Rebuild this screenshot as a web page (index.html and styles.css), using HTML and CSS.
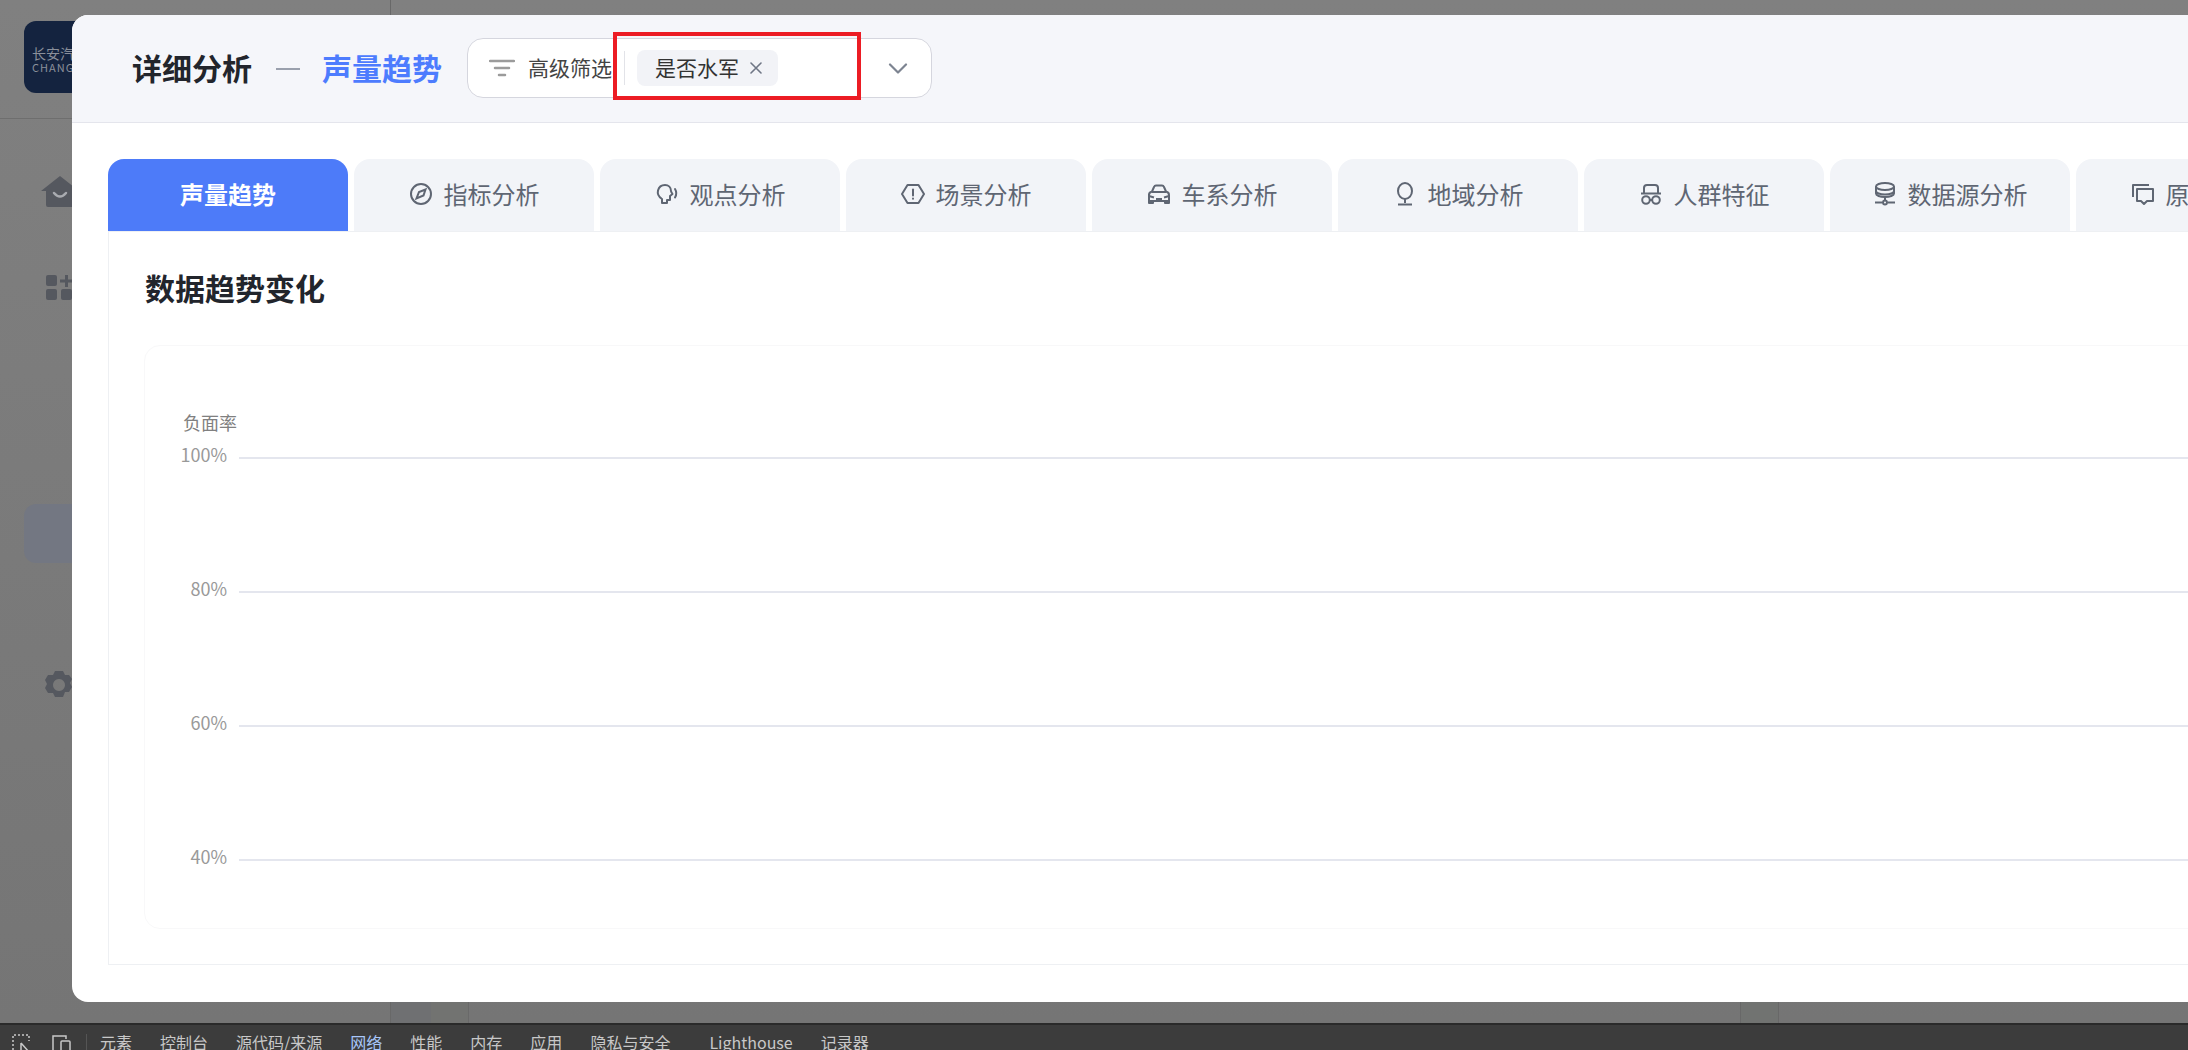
FILE: index.html
```html
<!DOCTYPE html>
<html lang="zh-CN">
<head>
    <meta charset="UTF-8">
    <meta name="viewport" content="width=device-width, initial-scale=1.0">
    <title>详细分析 - 声量趋势</title>
    <link rel="stylesheet" href="styles.css">
</head>
<body>
    <div class="page">
        <div class="page-main">
            <div class="sidebar">
                <div class="logo-row">
                    <div class="logo">
                        <span class="logo-cn">长安汽车</span>
                        <span class="logo-en">CHANGAN</span>
                    </div>
                </div>
                <div class="side-item side-home">
                    <svg width="40" height="32" viewBox="0 0 40 32"><path fill="#55585f" d="M20 0 L39 15 H34 V29 Q34 31 32 31 H8 Q6 31 6 29 V15 H1 Z"/><path fill="none" stroke="#a9abb0" stroke-width="2.5" stroke-linecap="round" d="M14 17 Q20 24 26 17"/></svg>
                </div>
                <div class="side-item side-grid">
                    <svg width="40" height="28" viewBox="0 0 40 28" fill="#55585f"><rect x="1" y="1" width="11" height="11" rx="2"/><rect x="1" y="15" width="11" height="11" rx="2"/><rect x="16" y="15" width="11" height="11" rx="2"/><path d="M20 1h3v4.500h5v3h-5V13h-3V8.500h-5v-3h5z"/></svg>
                </div>
                <div class="side-active"></div>
                <div class="side-item side-gear">
                    <svg width="40" height="30" viewBox="0 0 40 30"><path fill="#55585f" fill-rule="evenodd" d="M14 1h8l2 4 4 0 3 4-2 4 2 4-3 5-4 0-2 5h-8l-2-4-5 0-3-5 2-4-2-4 3-5 5 0zM18 9a6 6 0 1 0 0.010 0z"/></svg>
                </div>
            </div>
            <div class="page-split"></div>
            <div class="page-split-right"></div>
            <div class="page-rest"></div>
            <div class="page-block"></div>
        </div>

        <div class="devtools">
            <svg class="dev-icon" width="20" height="20" viewBox="0 0 20 20" fill="none" stroke="#c8c8c8" stroke-width="1.500"><path stroke-dasharray="2 2" d="M1 16V1h16v6"/><path d="M9 9v9M9 9l8 9"/></svg>
            <svg class="dev-icon" width="22" height="20" viewBox="0 0 22 20" fill="none" stroke="#c8c8c8" stroke-width="1.500"><path d="M3 18V2h13v3"/><rect x="11" y="7" width="9" height="12" rx="1"/><path d="M1 18h9"/></svg>
            <div class="dev-divider"></div>
            <div class="dev-tabs">
                <span>元素</span>
                <span>控制台</span>
                <span>源代码/来源</span>
                <span class="dev-on">网络</span>
                <span>性能</span>
                <span>内存</span>
                <span>应用</span>
                <span>隐私与安全</span>
                <span class="dev-wide">Lighthouse</span>
                <span>记录器</span>
            </div>
        </div>
    </div>

    <div class="modal">
        <div class="modal-header">
            <span class="title">详细分析</span>
            <span class="title-dash"></span>
            <span class="title title-active">声量趋势</span>
            <div class="filter">
                <svg class="filter-icon" width="26" height="18" viewBox="0 0 26 18" fill="none" stroke="#9b9b9b" stroke-width="2.500" stroke-linecap="round"><path d="M1 2h24M6 9h14M10 16h6"/></svg>
                <span class="filter-label">高级筛选</span>
                <span class="filter-line"></span>
                <div class="tag">
                    <span class="tag-text">是否水军</span>
                    <svg width="12" height="12" viewBox="0 0 12 12" stroke="#6f7685" stroke-width="1.600" stroke-linecap="round"><path d="M1 1l10 10M11 1L1 11"/></svg>
                </div>
                <svg class="filter-arrow" width="20" height="11" viewBox="0 0 20 11" fill="none" stroke="#7d8491" stroke-width="2.200" stroke-linecap="round" stroke-linejoin="round"><path d="M2 1.500l8 8 8-8"/></svg>
            </div>
            <div class="red-mark"></div>
        </div>

        <div class="modal-body">
            <div class="tabs">
                <div class="tab tab-active">声量趋势</div>
                <div class="tab">
                    <svg width="24" height="24" viewBox="0 0 24 24" fill="none" stroke="#5f6673" stroke-width="2"><circle cx="12" cy="12" r="10"/><path d="M16.500 7.500l-2 6-7 3 2.500-6.500z"/></svg>
                    指标分析
                </div>
                <div class="tab">
                    <svg width="24" height="24" viewBox="0 0 24 24" fill="none" stroke="#5f6673" stroke-width="2" stroke-linecap="round" stroke-linejoin="round"><path d="M7 21v-4C4 15 2 12.500 3 8.500 4 4.500 7 3 10 3c3.500 0 6 2.500 6 6 0 1 1 2 1.500 3L15 14v4l-3 0v3z"/><path d="M20 7c1.500 2.500 1.500 6 0 8.500"/></svg>
                    观点分析
                </div>
                <div class="tab">
                    <svg width="24" height="24" viewBox="0 0 24 24" fill="none" stroke="#5f6673" stroke-width="2" stroke-linejoin="round"><path d="M6.500 3h11L23 12l-5.500 9h-11L1 12z"/><path stroke-linecap="round" d="M12 7.500v6"/><path stroke-linecap="round" d="M12 16.500v.3"/></svg>
                    场景分析
                </div>
                <div class="tab">
                    <svg width="24" height="24" viewBox="0 0 24 24" fill="none" stroke="#5f6673" stroke-width="2" stroke-linejoin="round"><path d="M2 19v-6c0-2 1-3 3-3.500L7 5c.4-1 1-1.500 2-1.500h6c1 0 1.600.5 2 1.500l2 4.500c2 .5 3 1.500 3 3.500v6z"/><path d="M2 19v2h4v-2M18 19v2h4v-2M5 10h14M2 14l5 1.500M22 14l-5 1.500M9 17h6"/></svg>
                    车系分析
                </div>
                <div class="tab">
                    <svg width="24" height="24" viewBox="0 0 24 24" fill="none" stroke="#5f6673" stroke-width="2"><ellipse cx="12" cy="9" rx="7" ry="8"/><path d="M12 17v4M5 22.500h14"/></svg>
                    地域分析
                </div>
                <div class="tab">
                    <svg width="24" height="24" viewBox="0 0 24 24" fill="none" stroke="#5f6673" stroke-width="2" stroke-linejoin="round"><path d="M5 11V6c0-2 1-3 3-3h8c2 0 3 1 3 3v5"/><path d="M2 11.500h20"/><circle cx="7" cy="18" r="3.800"/><circle cx="17" cy="18" r="3.800"/><path d="M10.800 18h2.400"/></svg>
                    人群特征
                </div>
                <div class="tab">
                    <svg width="24" height="24" viewBox="0 0 24 24" fill="none" stroke="#5f6673" stroke-width="2" stroke-linejoin="round"><ellipse cx="12" cy="4.500" rx="9" ry="3.500"/><path d="M3 4.500v7c0 2 4 3.500 9 3.500s9-1.500 9-3.500v-7M3 9c0 2 4 3.500 9 3.500s9-1.500 9-3.500M12 15v4M2 20.500h7M15 20.500h7"/><circle cx="12" cy="20.500" r="2"/></svg>
                    数据源分析
                </div>
                <div class="tab">
                    <svg width="24" height="24" viewBox="0 0 24 24" fill="none" stroke="#5f6673" stroke-width="2" stroke-linejoin="round"><path d="M2 15V3h16"/><path d="M6 7h16v12h-6l-3 3-3-3H6z"/></svg>
                    原文分析
                </div>
            </div>

            <div class="panel">
                <h2 class="panel-title">数据趋势变化</h2>
                <div class="chart-card">
                    <div class="axis-name">负面率</div>
                    <div class="chart-row"><span class="axis-label">100%</span><span class="grid-line"></span></div>
                    <div class="chart-row"><span class="axis-label">80%</span><span class="grid-line"></span></div>
                    <div class="chart-row"><span class="axis-label">60%</span><span class="grid-line"></span></div>
                    <div class="chart-row"><span class="axis-label">40%</span><span class="grid-line"></span></div>
                </div>
            </div>
        </div>
    </div>
</body>
</html>
```

FILE: styles.css
```css
html, body {
    margin: 0;
    height: 100%;
    overflow: hidden;
}

body {
    position: relative;
    width: 2188px;
    height: 1050px;
    font-family: "Noto Sans CJK SC", "Noto Sans", sans-serif;
    background-color: #7b7b7b;
}

.page {
    display: flex;
    flex-direction: column;
    height: 1050px;
}

.page-main {
    flex: 1;
    display: flex;
    background: linear-gradient(#808080, #757575);
}

.sidebar {
    width: 390px;
    flex-shrink: 0;
    display: flex;
    flex-direction: column;
    align-items: flex-start;
}

.logo-row {
    width: 100%;
    height: 119px;
    box-sizing: border-box;
    padding: 21px 0 0 24px;
    border-bottom: 1px solid #6e6e6e;
}

.logo {
    width: 110px;
    height: 72px;
    border-radius: 12px;
    background-color: #14233f;
    display: flex;
    flex-direction: column;
    justify-content: center;
    padding: 4px 0 0 8px;
    box-sizing: border-box;
    color: #8a8f9a;
}

.logo-cn {
    font-size: 14px;
    line-height: 15px;
}

.logo-en {
    font-size: 11px;
    line-height: 12px;
    letter-spacing: 1px;
}

.side-item {
    line-height: 0;
}

.side-home {
    margin-top: 57px;
    padding-left: 40px;
}

.side-grid {
    margin-top: 66px;
    padding-left: 45px;
}

.side-active {
    width: 100px;
    height: 59px;
    margin: 202px 0 0 24px;
    border-radius: 12px;
    background-color: #737782;
}

.side-gear {
    margin-top: 107px;
    padding-left: 41px;
}

/* the darker bits of the page only show in the strip under the dialog */
.page-split {
    width: 41px;
    box-sizing: border-box;
    border-left: 1px solid #686868;
    background: linear-gradient(#6f7072, #6f7072) no-repeat bottom / 100% 21px;
}

.page-split-right {
    width: 37px;
    height: 21px;
    align-self: flex-end;
    background-color: #727371;
    border-right: 1px solid #696969;
}

.page-rest {
    width: 1271px;
}

.page-block {
    width: 37px;
    height: 21px;
    align-self: flex-end;
    background-color: #717371;
    border: 1px solid #686868;
    border-width: 0 1px;
}

.devtools {
    height: 25px;
    flex-shrink: 0;
    display: flex;
    align-items: flex-start;
    padding-left: 12px;
    background-color: #3c3c3c;
    border-top: 2px solid #2a2a2a;
    overflow: hidden;
    color: #c8c8c8;
    font-size: 16px;
}

.dev-icon {
    margin-top: 9px;
    margin-right: 18px;
    flex-shrink: 0;
}

.dev-divider {
    width: 1px;
    height: 22px;
    margin: 9px 13px 0 -4px;
    background-color: #555;
}

.dev-tabs {
    display: flex;
    gap: 28px;
    line-height: 16px;
    padding-top: 9px;
    white-space: nowrap;
}

.dev-on {
    color: #a8c7fa;
}

.dev-wide {
    margin-left: 11px;
}

/* the dialog runs past the right edge of the window */
.modal {
    position: absolute;
    left: 72px;
    top: 15px;
    width: 2400px;
    height: 987px;
    background-color: #fff;
    border-radius: 16px;
    overflow: hidden;
}

.modal-header {
    position: relative;
    height: 108px;
    box-sizing: border-box;
    display: flex;
    align-items: center;
    padding-left: 60px;
    background-color: #f5f6fa;
    border-bottom: 1px solid #e4e5ec;
}

.title {
    font-size: 30px;
    font-weight: 700;
    line-height: 40px;
    color: #22252c;
    margin-bottom: 4px;
}

.title-active {
    color: #4d7cfe;
}

.title-dash {
    width: 24px;
    height: 2px;
    margin: 0 22px 0 24px;
    background-color: #9aa0ad;
}

.filter {
    display: flex;
    align-items: center;
    width: 465px;
    height: 60px;
    box-sizing: border-box;
    margin: 0 0 1px 25px;
    padding-left: 21px;
    background-color: #fff;
    border: 1px solid #d5d6de;
    border-radius: 16px;
}

.filter-icon {
    flex-shrink: 0;
}

.filter-label {
    margin-left: 13px;
    padding-bottom: 2px;
    font-size: 21px;
    color: #444;
    white-space: nowrap;
}

.filter-line {
    width: 1px;
    height: 34px;
    margin: 0 12px;
    background-color: #e2e3e8;
}

.tag {
    display: flex;
    align-items: center;
    gap: 11px;
    height: 36px;
    width: 141px;
    box-sizing: border-box;
    padding-left: 18px;
    border-radius: 8px;
    background-color: #f2f3f7;
    font-size: 21px;
    color: #333;
}

.tag-text {
    padding-bottom: 2px;
}

.filter-arrow {
    margin-left: 110px;
}

.red-mark {
    position: absolute;
    left: 541px;
    top: 17px;
    width: 248px;
    height: 68px;
    box-sizing: border-box;
    border: 4px solid #ec1c24;
}

.modal-body {
    padding: 36px 0 0 36px;
}

.tabs {
    display: flex;
    gap: 6px;
}

.tab {
    width: 240px;
    height: 72px;
    box-sizing: border-box;
    padding-bottom: 3px;
    flex-shrink: 0;
    display: flex;
    align-items: center;
    justify-content: center;
    gap: 11px;
    background-color: #f2f4f8;
    border-radius: 16px 16px 0 0;
    font-size: 24px;
    color: #5f6673;
}

.tab-active {
    background-color: #4d7bf9;
    color: #fff;
    font-weight: 700;
}

.panel {
    height: 734px;
    box-sizing: border-box;
    padding: 0 35px;
    border: 1px solid #eef0f3;
}

.panel-title {
    margin: 35px 0 38px 1px;
    font-size: 30px;
    font-weight: 700;
    line-height: 40px;
    color: #22252c;
}

.chart-card {
    height: 584px;
    box-sizing: border-box;
    padding-top: 66px;
    border: 1px solid #f8f8f9;
    border-radius: 16px;
    overflow: hidden;
}

.axis-name {
    width: 92px;
    height: 24px;
    text-align: right;
    font-size: 18px;
    line-height: 21px;
    color: #808080;
    margin-bottom: 9px;
}

.chart-row {
    display: flex;
    align-items: flex-start;
    height: 134px;
}

.axis-label {
    width: 82px;
    margin-top: -3px;
    text-align: right;
    font-size: 18px;
    line-height: 24px;
    color: #999;
}

.grid-line {
    flex: 1;
    height: 2px;
    margin: 12px 0 0 12px;
    background-color: #e4e6ee;
}
```
